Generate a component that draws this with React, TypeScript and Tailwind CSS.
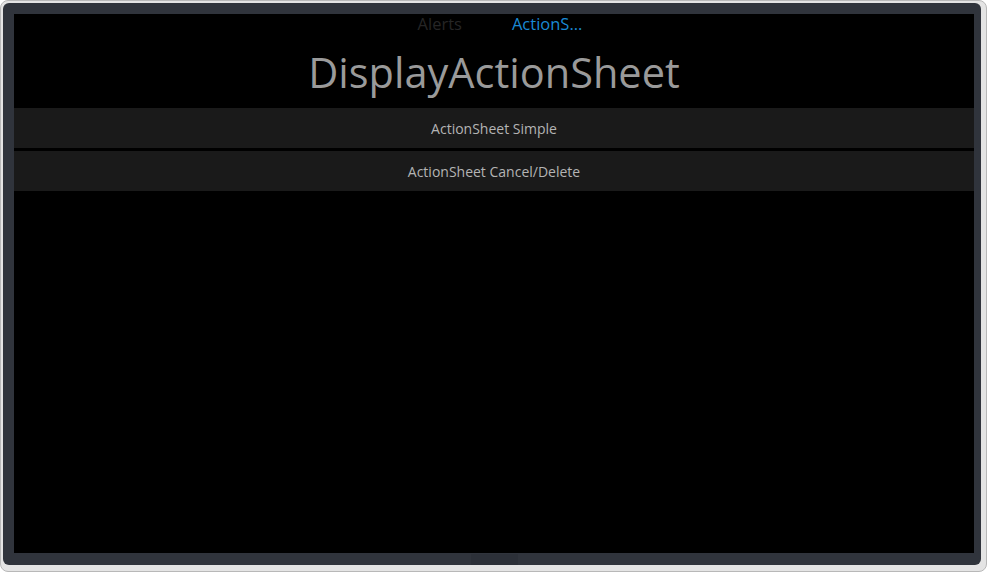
import React from 'react'

const font = { fontFamily: '"Open Sans", "Noto Sans", sans-serif' }

const SheetButton: React.FC<{ label: string }> = ({ label }) => (
  <button className="w-full h-10 bg-[#1a1a1a] flex items-center justify-center text-[14px] text-[#b4b4b4]">
    {label}
  </button>
)

export default function App() {
  return (
    <div className="w-[987px] h-[572px] bg-white" style={font}>
      <div className="w-full h-full rounded-[8px] bg-[#e4e4e4] border border-[#b8b8b8] pt-[2px] pl-[2px] pr-[5px] pb-[6px]">
        <div className="w-full h-full rounded-[6px] bg-[#30343c] pt-[11px] pl-[11px] pr-[7px] flex flex-col">
          <div className="flex-1 bg-black flex flex-col">
            <div className="h-[20px] pl-[12px] flex items-center justify-center gap-[50px] text-[16.5px]">
              <span className="text-[#262626]">Alerts</span>
              <span className="text-[#1a8ad4]">ActionS...</span>
            </div>
            <h1 className="h-[74px] pt-[4px] flex items-center justify-center text-[41.5px] text-[#9a9a9a] leading-none">
              DisplayActionSheet
            </h1>
            <div className="flex flex-col gap-[3px]">
              <SheetButton label="ActionSheet Simple" />
              <SheetButton label="ActionSheet Cancel/Delete" />
            </div>
          </div>
          <div className="h-[12px] flex justify-center">
            <div className="w-[47px] h-[11px] mt-[1px] bg-[#2c3038]" />
          </div>
        </div>
      </div>
    </div>
  )
}
